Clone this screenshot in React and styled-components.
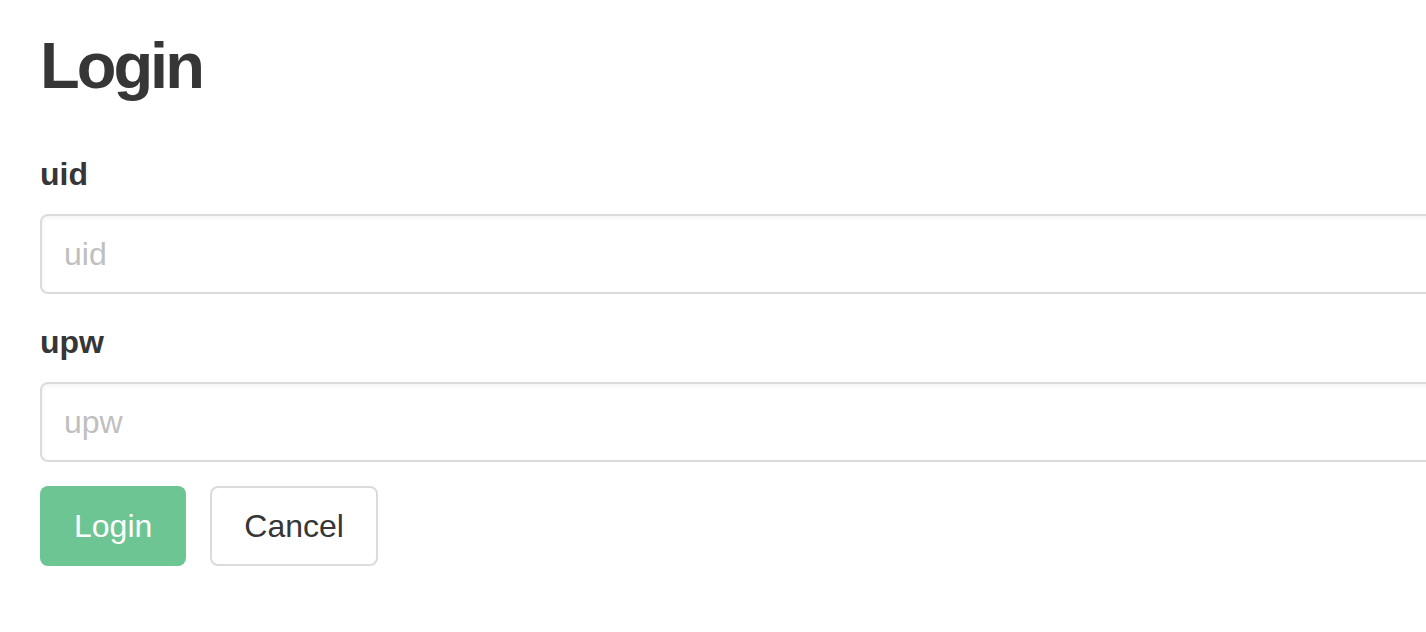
import React from 'react'
import styled, { createGlobalStyle } from 'styled-components'

const GlobalStyle = createGlobalStyle`
    html, body {
        margin: 0;
        padding: 0;
        background: #fff;
        overflow: hidden;
    }
    body {
        font-family: "Liberation Sans", Arial, sans-serif;
        color: #363636;
    }
`

const Page = styled.div`
    overflow: hidden;
    height: 632px;
`

const Container = styled.div`
    padding: 30px 0 0 40px;
    width: 1500px;
`

const Title = styled.h1`
    margin: 0 0 48px;
    font-size: 65px;
    line-height: 72px;
    font-weight: 700;
    letter-spacing: -3px;
    color: #363636;
`

const Field = styled.div`
    margin-bottom: 24px;
`

const Label = styled.label`
    display: block;
    font-size: 32px;
    line-height: 48px;
    font-weight: 700;
    margin-bottom: 16px;
`

const Input = styled.input`
    box-sizing: border-box;
    width: 100%;
    height: 80px;
    padding: 0 22px;
    border: 2px solid #dbdbdb;
    border-radius: 8px;
    box-shadow: inset 0 2px 4px rgba(10, 10, 10, 0.05);
    font-family: inherit;
    font-size: 32px;
    color: #363636;
    outline: none;

    &::placeholder {
        color: #bfbfbf;
    }
`

const Buttons = styled.div`
    display: flex;
    gap: 24px;
`

const Button = styled.button`
    box-sizing: border-box;
    height: 80px;
    padding: 0 32px;
    border-radius: 8px;
    border: 2px solid ${props => props.primary ? 'transparent' : '#dbdbdb'};
    background: ${props => props.primary ? '#6dc594' : '#fff'};
    color: ${props => props.primary ? '#fff' : '#363636'};
    font-family: inherit;
    font-size: 32px;
    cursor: pointer;
`

function App() {
    return (
        <Page>
            <GlobalStyle />
            <Container>
                <Title>Login</Title>
                <Field>
                    <Label>uid</Label>
                    <Input type="text" placeholder="uid" />
                </Field>
                <Field>
                    <Label>upw</Label>
                    <Input type="password" placeholder="upw" />
                </Field>
                <Buttons>
                    <Button primary>Login</Button>
                    <Button>Cancel</Button>
                </Buttons>
            </Container>
        </Page>
    )
}

export default App
